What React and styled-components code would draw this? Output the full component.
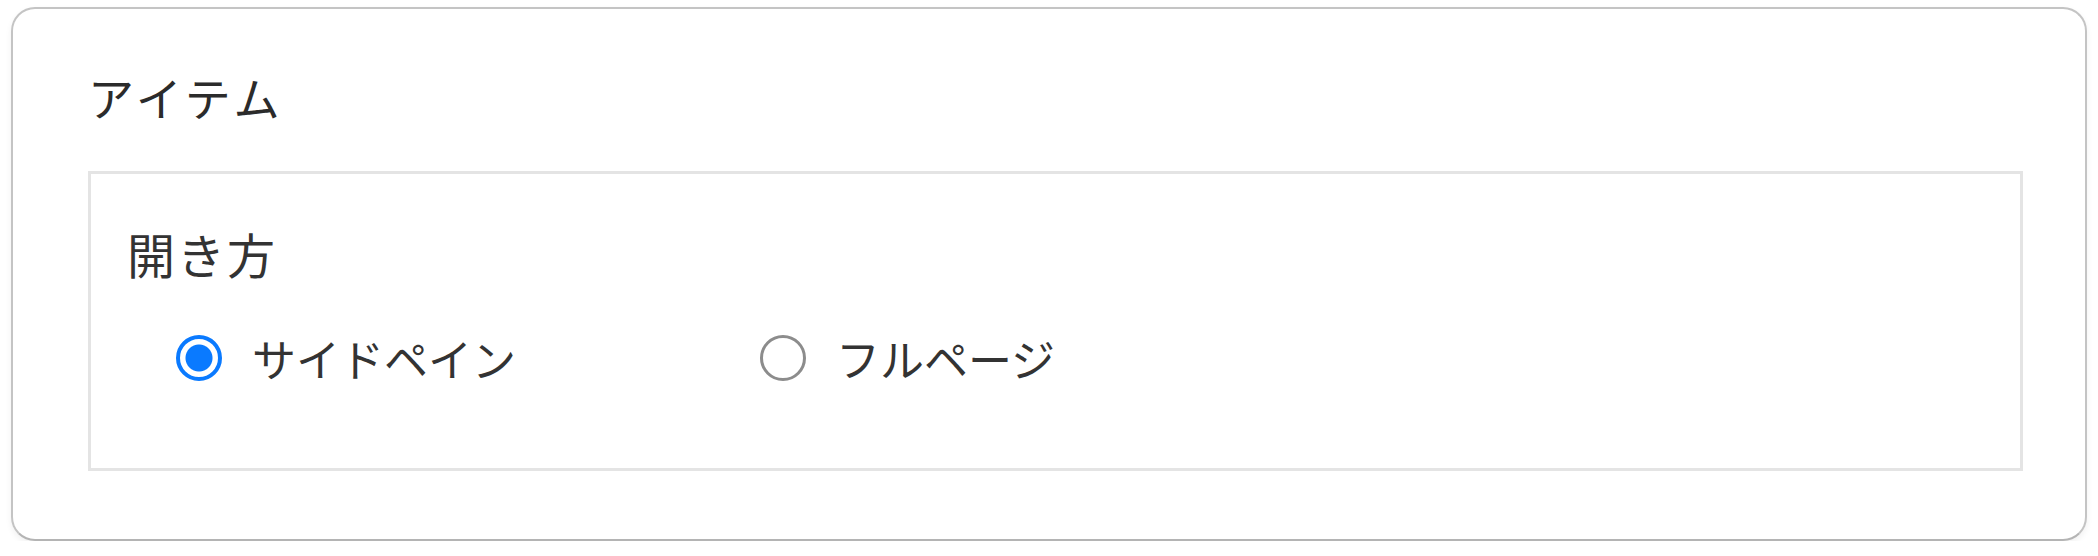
import React, { useState } from "react";
import styled, { createGlobalStyle } from "styled-components";

const GlobalStyle = createGlobalStyle`
  html, body {
    margin: 0;
    padding: 0;
    background: #ffffff;
  }
  body {
    font-family: "Noto Sans CJK JP", "Noto Sans", sans-serif;
    color: #333333;
  }
`;

const options = [
  { value: "side", label: "サイドペイン" },
  { value: "full", label: "フルページ" },
];

const App = () => {
  const [openMode, setOpenMode] = useState("side");

  return (
    <>
      <GlobalStyle />
      <Card>
        <Title>アイテム</Title>
        <Section>
          <FieldLabel>開き方</FieldLabel>
          <RadioGroup>
            {options.map((opt) => (
              <RadioOption key={opt.value} onClick={() => setOpenMode(opt.value)}>
                <RadioCircle checked={openMode === opt.value} />
                <RadioLabel>{opt.label}</RadioLabel>
              </RadioOption>
            ))}
          </RadioGroup>
        </Section>
      </Card>
    </>
  );
};

export default App;

const Card = styled.div`
  margin: 7px 11px 0 11px;
  height: 534px;
  box-sizing: border-box;
  border: 2px solid #c4c4c4;
  border-bottom-color: #b4b4b4;
  border-radius: 24px;
  box-shadow: 0 3px 6px rgba(0, 0, 0, 0.06);
  padding: 57px 62px 0 75px;
  background: #ffffff;
`;

const Title = styled.div`
  font-size: 46px;
  line-height: 60px;
  color: #2b2b2b;
  letter-spacing: 4px;
`;

const Section = styled.div`
  margin-top: 45px;
  height: 300px;
  box-sizing: border-box;
  border: 3px solid #e4e4e4;
  padding: 51px 0 0 36px;
`;

const FieldLabel = styled.div`
  font-size: 48px;
  line-height: 56px;
  color: #333333;
  letter-spacing: 2px;
`;

const RadioGroup = styled.div`
  display: flex;
  align-items: center;
  gap: 244px;
  margin-top: 49px;
  padding-left: 49px;
`;

const RadioOption = styled.label`
  display: flex;
  align-items: center;
  gap: 30px;
  cursor: pointer;
`;

const RadioCircle = styled.span`
  width: 46px;
  height: 46px;
  box-sizing: border-box;
  border-radius: 50%;
  border: ${(p) => (p.checked ? "4px solid #0a7aff" : "3px solid #8c8c8c")};
  background: ${(p) =>
    p.checked
      ? "radial-gradient(circle, #0a7aff 0 13px, #ffffff 14px)"
      : "#ffffff"};
  flex-shrink: 0;
`;

const RadioLabel = styled.span`
  font-size: 44px;
  line-height: 56px;
  color: #333333;
`;
